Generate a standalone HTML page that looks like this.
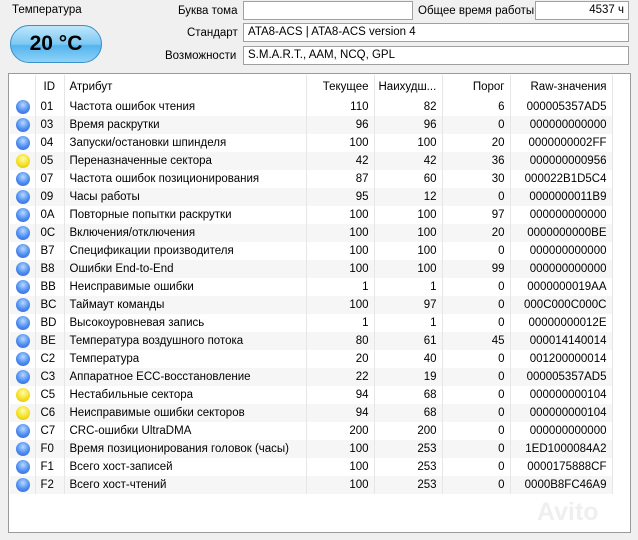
<!DOCTYPE html><html><head><meta charset="utf-8"><style>
body{margin:0;width:638px;height:540px;background:#f0f0f0;font-family:"Liberation Sans",sans-serif;font-size:11.5px;color:#000;position:relative;overflow:hidden}
.a{position:absolute;white-space:nowrap}
.box{position:absolute;background:#fff;border:1px solid #a0a0a0;box-sizing:border-box;height:19px;line-height:17px;padding:0 4px}
.pill{position:absolute;left:10px;top:25px;width:92px;height:38px;border-radius:19px;background:linear-gradient(#bfe6fb,#7dc8f3 50%,#55b4ee 55%,#8fd3f7);border:1px solid #3a90c8;box-sizing:border-box;text-align:center;line-height:36px;font-weight:bold;font-size:21px}
.tbl{position:absolute;left:8px;top:73px;width:623px;height:460px;background:#fff;border:1px solid #9a9a9a;box-sizing:border-box}
table{border-collapse:collapse;position:absolute;left:1px;top:1px}
td{height:18px;padding:0;white-space:nowrap;border-right:1px solid #e6e6e6}
tr:nth-child(odd) td{background:#f6f6f6}
tr.h td{background:#fff;height:23px}
td.r{text-align:right;padding-right:5px}
.d{display:inline-block;width:14px;height:14px;border-radius:50%;background:radial-gradient(circle at 50% 35%,#b8d8ff,#4a8cf0 55%,#3a5ed8);vertical-align:middle;margin-left:6px}
.y{background:radial-gradient(circle at 50% 35%,#fffbb0,#f5e020 55%,#d8b800)}
</style></head><body>
<div class="a" style="left:12px;top:4px">Температура</div>
<div class="pill">20 °C</div>
<div class="a" style="left:178px;top:5px">Буква тома</div>
<div class="box" style="left:243px;top:1px;width:170px"></div>
<div class="a" style="left:418px;top:5px">Общее время работы</div>
<div class="box" style="left:535px;top:1px;width:94px;text-align:right">4537 ч</div>
<div class="a" style="left:187px;top:27px">Стандарт</div>
<div class="box" style="left:243px;top:23px;width:386px">ATA8-ACS | ATA8-ACS version 4</div>
<div class="a" style="left:165px;top:50px">Возможности</div>
<div class="box" style="left:243px;top:46px;width:386px">S.M.A.R.T., AAM, NCQ, GPL</div>
<div class="tbl"><table>
<colgroup><col style="width:25px"><col style="width:29px"><col style="width:242px"><col style="width:68px"><col style="width:68px"><col style="width:68px"><col style="width:102px"></colgroup>
<tr class="h"><td></td><td style="padding-left:8px">ID</td><td style="padding-left:5px">Атрибут</td><td class="r">Текущее</td><td style="padding-left:4px">Наихудш...</td><td class="r">Порог</td><td class="r">Raw-значения</td></tr>
<tr><td><i class="d"></i></td><td style="padding-left:5px">01</td><td style="padding-left:5px">Частота ошибок чтения</td><td class="r">110</td><td class="r">82</td><td class="r">6</td><td class="r">000005357AD5</td></tr>
<tr><td><i class="d"></i></td><td style="padding-left:5px">03</td><td style="padding-left:5px">Время раскрутки</td><td class="r">96</td><td class="r">96</td><td class="r">0</td><td class="r">000000000000</td></tr>
<tr><td><i class="d"></i></td><td style="padding-left:5px">04</td><td style="padding-left:5px">Запуски/остановки шпинделя</td><td class="r">100</td><td class="r">100</td><td class="r">20</td><td class="r">0000000002FF</td></tr>
<tr><td><i class="d y"></i></td><td style="padding-left:5px">05</td><td style="padding-left:5px">Переназначенные сектора</td><td class="r">42</td><td class="r">42</td><td class="r">36</td><td class="r">000000000956</td></tr>
<tr><td><i class="d"></i></td><td style="padding-left:5px">07</td><td style="padding-left:5px">Частота ошибок позиционирования</td><td class="r">87</td><td class="r">60</td><td class="r">30</td><td class="r">000022B1D5C4</td></tr>
<tr><td><i class="d"></i></td><td style="padding-left:5px">09</td><td style="padding-left:5px">Часы работы</td><td class="r">95</td><td class="r">12</td><td class="r">0</td><td class="r">0000000011B9</td></tr>
<tr><td><i class="d"></i></td><td style="padding-left:5px">0A</td><td style="padding-left:5px">Повторные попытки раскрутки</td><td class="r">100</td><td class="r">100</td><td class="r">97</td><td class="r">000000000000</td></tr>
<tr><td><i class="d"></i></td><td style="padding-left:5px">0C</td><td style="padding-left:5px">Включения/отключения</td><td class="r">100</td><td class="r">100</td><td class="r">20</td><td class="r">0000000000BE</td></tr>
<tr><td><i class="d"></i></td><td style="padding-left:5px">B7</td><td style="padding-left:5px">Спецификации производителя</td><td class="r">100</td><td class="r">100</td><td class="r">0</td><td class="r">000000000000</td></tr>
<tr><td><i class="d"></i></td><td style="padding-left:5px">B8</td><td style="padding-left:5px">Ошибки End-to-End</td><td class="r">100</td><td class="r">100</td><td class="r">99</td><td class="r">000000000000</td></tr>
<tr><td><i class="d"></i></td><td style="padding-left:5px">BB</td><td style="padding-left:5px">Неисправимые ошибки</td><td class="r">1</td><td class="r">1</td><td class="r">0</td><td class="r">0000000019AA</td></tr>
<tr><td><i class="d"></i></td><td style="padding-left:5px">BC</td><td style="padding-left:5px">Таймаут команды</td><td class="r">100</td><td class="r">97</td><td class="r">0</td><td class="r">000C000C000C</td></tr>
<tr><td><i class="d"></i></td><td style="padding-left:5px">BD</td><td style="padding-left:5px">Высокоуровневая запись</td><td class="r">1</td><td class="r">1</td><td class="r">0</td><td class="r">00000000012E</td></tr>
<tr><td><i class="d"></i></td><td style="padding-left:5px">BE</td><td style="padding-left:5px">Температура воздушного потока</td><td class="r">80</td><td class="r">61</td><td class="r">45</td><td class="r">000014140014</td></tr>
<tr><td><i class="d"></i></td><td style="padding-left:5px">C2</td><td style="padding-left:5px">Температура</td><td class="r">20</td><td class="r">40</td><td class="r">0</td><td class="r">001200000014</td></tr>
<tr><td><i class="d"></i></td><td style="padding-left:5px">C3</td><td style="padding-left:5px">Аппаратное ECC-восстановление</td><td class="r">22</td><td class="r">19</td><td class="r">0</td><td class="r">000005357AD5</td></tr>
<tr><td><i class="d y"></i></td><td style="padding-left:5px">C5</td><td style="padding-left:5px">Нестабильные сектора</td><td class="r">94</td><td class="r">68</td><td class="r">0</td><td class="r">000000000104</td></tr>
<tr><td><i class="d y"></i></td><td style="padding-left:5px">C6</td><td style="padding-left:5px">Неисправимые ошибки секторов</td><td class="r">94</td><td class="r">68</td><td class="r">0</td><td class="r">000000000104</td></tr>
<tr><td><i class="d"></i></td><td style="padding-left:5px">C7</td><td style="padding-left:5px">CRC-ошибки UltraDMA</td><td class="r">200</td><td class="r">200</td><td class="r">0</td><td class="r">000000000000</td></tr>
<tr><td><i class="d"></i></td><td style="padding-left:5px">F0</td><td style="padding-left:5px">Время позиционирования головок (часы)</td><td class="r">100</td><td class="r">253</td><td class="r">0</td><td class="r">1ED1000084A2</td></tr>
<tr><td><i class="d"></i></td><td style="padding-left:5px">F1</td><td style="padding-left:5px">Всего хост-записей</td><td class="r">100</td><td class="r">253</td><td class="r">0</td><td class="r">0000175888CF</td></tr>
<tr><td><i class="d"></i></td><td style="padding-left:5px">F2</td><td style="padding-left:5px">Всего хост-чтений</td><td class="r">100</td><td class="r">253</td><td class="r">0</td><td class="r">0000B8FC46A9</td></tr>
</table>
<div class="a" style="left:528px;top:424px;font-size:25px;color:#efefef;font-weight:bold">Avito</div>
</div>
</body></html>
